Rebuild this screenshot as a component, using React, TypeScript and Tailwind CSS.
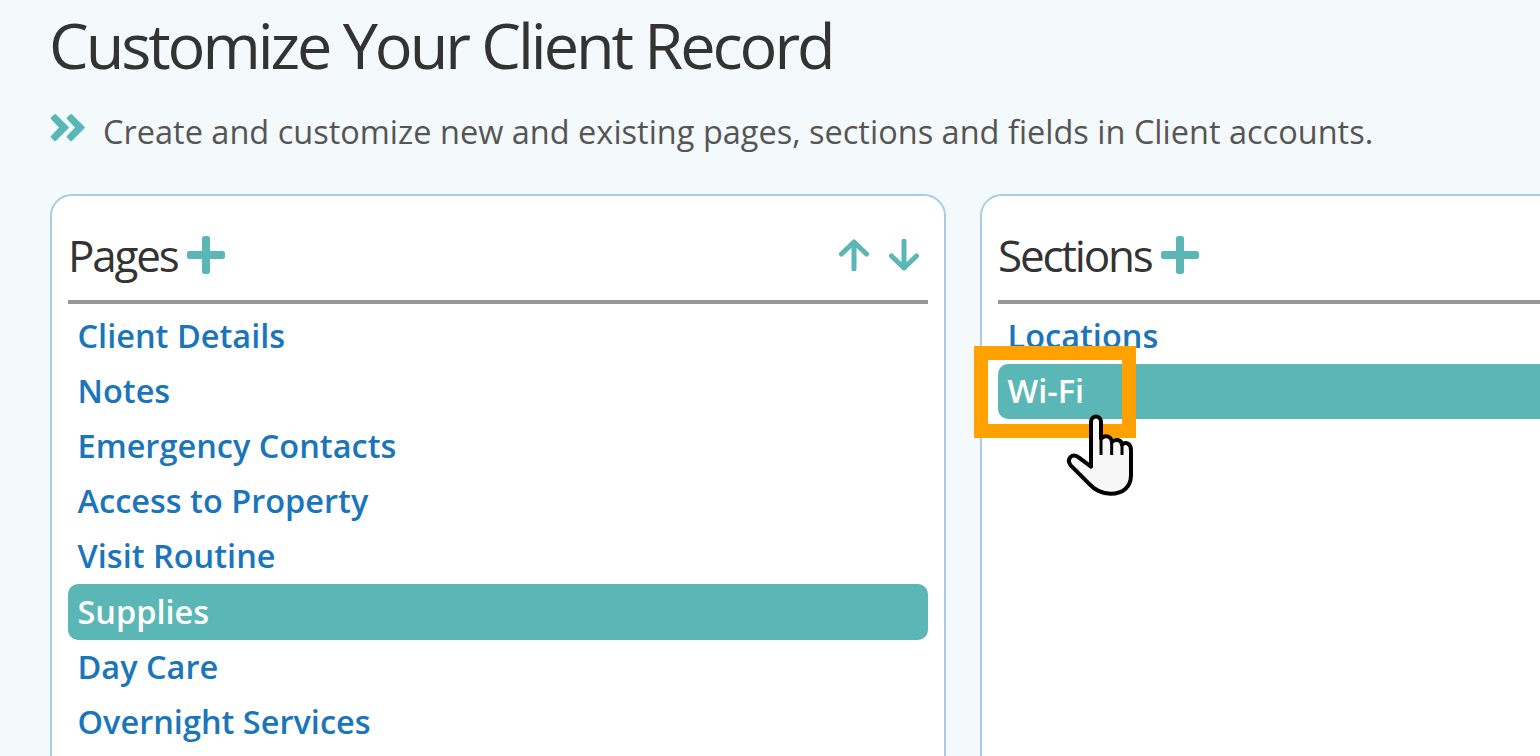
import { ReactNode } from 'react'

const pages = [
  'Client Details',
  'Notes',
  'Emergency Contacts',
  'Access to Property',
  'Visit Routine',
  'Supplies',
  'Day Care',
  'Overnight Services',
]

const sections = ['Locations', 'Wi-Fi']

const PlusIcon = () => (
  <svg width="38" height="38" viewBox="0 0 38 38" className="block">
    <rect x="15" y="0" width="8" height="38" rx="2.5" fill="#5ab7b6" />
    <rect x="0" y="15" width="38" height="8" rx="2.5" fill="#5ab7b6" />
  </svg>
)

const ArrowIcon = ({ down }: { down?: boolean }) => (
  <svg width="30" height="32" viewBox="0 0 30 32" className="block">
    <path
      d={down ? 'M15 2V29M2.5 17L15 29L27.5 17' : 'M15 30V3M2.5 15L15 3L27.5 15'}
      fill="none"
      stroke="#5ab7b6"
      strokeWidth="5"
      strokeLinecap="round"
      strokeLinejoin="round"
    />
  </svg>
)

const Row = ({ label, active }: { label: string; active?: boolean }) => (
  <li
    className={
      active
        ? 'flex h-[55.2px] items-center rounded-[10px] bg-[#5ab7b6] px-[9.5px] text-white'
        : 'flex h-[55.2px] items-center px-[9.5px] text-[#1b75bb]'
    }
  >
    {label}
  </li>
)

const Panel = ({ title, actions, children }: { title: string; actions?: ReactNode; children: ReactNode }) => (
  <div className="h-[700px] w-[896px] flex-none rounded-t-[22px] border-2 border-[#a9cde6] bg-white px-4">
    <div className="flex h-[108px] items-center justify-between border-b-4 border-[#979797] pt-[13px] pr-[9px]">
      <div className="flex items-center gap-[9px]">
        <h2 className="text-[44px] leading-none tracking-[-0.05em] text-[#333]">{title}</h2>
        <PlusIcon />
      </div>
      {actions}
    </div>
    <ul className="pt-[4.4px] text-[32.5px] font-semibold">{children}</ul>
  </div>
)

export default function App() {
  return (
    <div className="relative h-[756px] w-[1540px] overflow-hidden bg-[#f4f9fc] pl-[50px] font-['Open_Sans',sans-serif]">
      <h1 className="-ml-px h-[90px] text-[63px] leading-[90px] tracking-[-3.05px] text-[#333]">
        Customize Your Client Record
      </h1>
      <div className="flex h-[104px] items-start pt-[18px]">
        <svg width="35" height="30" viewBox="0 0 35 30" className="mt-[5px] block">
          <path
            d="M5 2.5L2.3 5.3L11 14.5L2.3 23.7L5 26.6L17.2 14.5ZM21 2.5L18.3 5.3L27 14.5L18.3 23.7L21 26.6L33.2 14.5Z"
            fill="#5ab7b6"
            stroke="#5ab7b6"
            strokeWidth="3"
            strokeLinejoin="round"
          />
        </svg>
        <p className="ml-[18px] text-[32.5px] leading-[48px] text-[#555]">
          Create and customize new and existing pages, sections and fields in Client accounts.
        </p>
      </div>
      <div className="flex gap-[34px]">
        <Panel
          title="Pages"
          actions={
            <div className="flex items-center gap-[20px]">
              <ArrowIcon />
              <ArrowIcon down />
            </div>
          }
        >
          {pages.map((p) => (
            <Row key={p} label={p} active={p === 'Supplies'} />
          ))}
        </Panel>
        <Panel title="Sections">
          {sections.map((s) => (
            <Row key={s} label={s} active={s === 'Wi-Fi'} />
          ))}
        </Panel>
      </div>

      <div className="absolute top-[346px] left-[974px] h-[92px] w-[162px] border-[14px] border-[#ffa200]" />
      <svg width="80" height="90" viewBox="300 270 240 270" className="absolute top-[410px] left-[1060px]">
        <path
          d="M393 440L393 306C393 284 423 284 423 306L423 356C433 344 453 346 456 366C464 356 484 358 486 374C496 364 513 370 513 390L513 465C513 500 490 521 452 521C424 521 404 510 386 490L332 436C318 416 336 398 356 412Z"
          fill="#f7f7f7"
          stroke="#000"
          strokeWidth="12"
          strokeLinejoin="round"
        />
        <path d="M423 352L423 405M455 362L455 405M486 372L486 405" fill="none" stroke="#000" strokeWidth="9" />
      </svg>
    </div>
  )
}
